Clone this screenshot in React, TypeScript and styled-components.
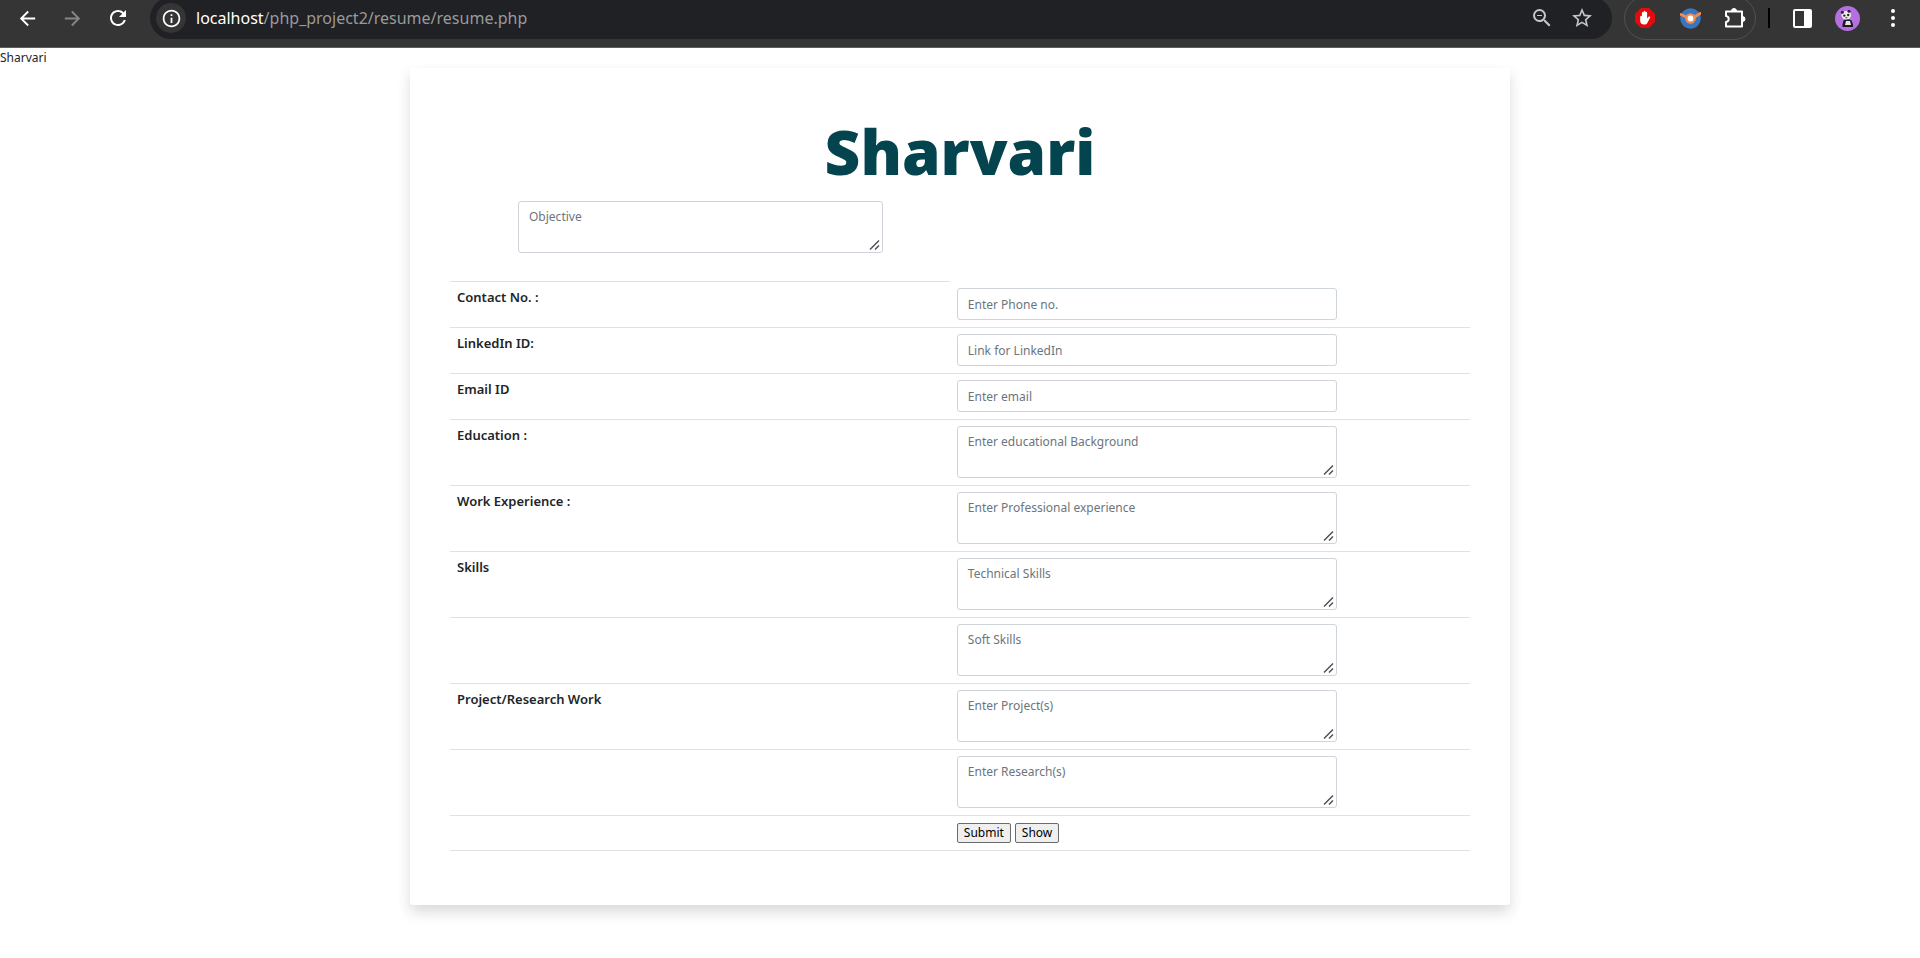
import React from 'react';
import styled, { createGlobalStyle } from 'styled-components';
import {
  MdArrowBack,
  MdArrowForward,
  MdInfoOutline,
  MdRefresh,
  MdStarBorder,
  MdZoomOut,
} from 'react-icons/md';

const GlobalStyle = createGlobalStyle`
  *, *::before, *::after { box-sizing: border-box; }
  body {
    margin: 0;
    background: #fff;
    color: #212529;
    font: 12px/20px "Noto Sans", "Open Sans", sans-serif;
  }
`;

/* Browser bar */

const Toolbar = styled.header`
  display: flex;
  align-items: flex-start;
  height: 48px;
  padding: 0 5px;
  background: #353535;
  border-bottom: 1px solid #5f5d5f;
  overflow: hidden;
`;

const ToolButton = styled.button<{ $width?: number; $color?: string }>`
  display: flex;
  flex: none;
  align-items: center;
  justify-content: center;
  width: ${p => p.$width ?? 45}px;
  height: 36px;
  padding: 0;
  border: 0;
  background: none;
  color: ${p => p.$color ?? '#fff'};
`;

const AddressBar = styled.div`
  display: flex;
  flex: 1;
  align-items: center;
  min-width: 0;
  height: 42px;
  margin: -3px 12px 0 10px;
  padding: 0 10px 0 6px;
  border-radius: 21px;
  background: #202124;
`;

const SiteInfo = styled.button`
  display: flex;
  flex: none;
  align-items: center;
  justify-content: center;
  width: 30px;
  height: 30px;
  padding: 0;
  border: 0;
  border-radius: 50%;
  background: #353535;
  color: #fff;
`;

const Url = styled.div`
  flex: 1;
  min-width: 0;
  margin-left: 10px;
  overflow: hidden;
  color: #9a9a9b;
  font-size: 16px;
  line-height: 24px;
  white-space: nowrap;
`;

const Host = styled.span`
  color: #fff;
`;

const Extensions = styled.div`
  display: flex;
  flex: none;
  align-items: center;
  justify-content: center;
  width: 132px;
  height: 44px;
  margin-top: -4px;
  border: 1px solid #505050;
  border-radius: 22px;
`;

const Divider = styled.span`
  flex: none;
  width: 2px;
  height: 20px;
  margin: 8px 10px 0 12px;
  background: #000;
`;

/* Resume form */

const UserName = styled.div`
  line-height: 20px;
`;

const Card = styled.main`
  max-width: 1100px;
  margin: 0 auto 53px;
  padding: 45px 40px 54px;
  border-radius: 3px;
  background: #fff;
  box-shadow: 0 7px 14px rgba(0, 0, 0, 0.15);
`;

const Title = styled.h1`
  margin: 0;
  color: #03444f;
  font-family: "Open Sans", sans-serif;
  font-size: 62px;
  font-weight: 800;
  line-height: 76px;
  text-align: center;
`;

const FormTable = styled.table`
  width: 100%;
  border-spacing: 0;
  table-layout: fixed;
`;

const LabelColumn = styled.col`
  width: 49%;
`;

const ObjectiveCell = styled.td`
  padding: 12px 67px 28px 68px;
  border-bottom: 1px solid #dee2e6;
`;

const LabelCell = styled.th`
  padding: 6px 7px;
  border-bottom: 1px solid #dee2e6;
  font-size: 13px;
  font-weight: 600;
  line-height: 18px;
  text-align: left;
  vertical-align: top;
`;

const FieldCell = styled.td`
  padding: 6px 7px 7px;
  border-bottom: 1px solid #dee2e6;
  vertical-align: top;
`;

const TextInput = styled.input`
  display: block;
  width: 380px;
  max-width: 100%;
  height: 32px;
  padding: 5px 10px;
  border: 1px solid #ced4da;
  border-radius: 3px;
  background: #fff;
  color: #212529;
  font: inherit;
  &::placeholder { color: #6c757d; opacity: 1; }
`;

const TextArea = styled.textarea<{ $fill?: boolean }>`
  display: block;
  width: ${p => (p.$fill ? '100%' : '380px')};
  max-width: 100%;
  height: 52px;
  padding: 5px 10px;
  border: 1px solid #ced4da;
  border-radius: 3px;
  background: #fff;
  color: #212529;
  font: inherit;
  resize: vertical;
  &::placeholder { color: #6c757d; opacity: 1; }
  &::-webkit-resizer {
    background: url("data:image/svg+xml,%3Csvg xmlns='http://www.w3.org/2000/svg' width='15' height='15'%3E%3Cpath d='M3 12.500L12 3.500M8 12.500L12 8.500' stroke='%23505050' stroke-width='1.500'/%3E%3C/svg%3E") no-repeat right bottom;
  }
`;

const Actions = styled.div`
  display: flex;
  align-items: flex-end;
  gap: 4px;
  height: 21px;
`;

const ActionButton = styled.button`
  height: 20px;
  padding: 0 6px;
  border: 1px solid #6b6b6b;
  border-radius: 2px;
  background: #efefef;
  color: #000;
  font: inherit;
  line-height: 18px;
`;

const StopHandIcon = () => (
  <svg width="20" height="22" viewBox="0 0 20 22" aria-hidden="true">
    <path d="M6 1h8l6 6v8l-6 6H6l-6-6V7z" fill="#e30b0b" />
    <path
      d="M5.2 9.5c0-1 1.6-1 1.7 0V6c0-1.200 1.700-1.200 1.700 0V4.700c0-1.200 1.800-1.200 1.800 0V5.600c0-1.200 1.700-1.200 1.700 0v6l1.300-1.700c.8-1 2.200-.2 1.700.8l-2.800 5.200c-.6 1.200-1.500 1.700-3 1.700H9c-2.200 0-3.600-1.300-3.800-3.600z"
      fill="#fff"
    />
  </svg>
);

const BlueBadgeIcon = () => (
  <svg width="21" height="21" viewBox="0 0 21 21" aria-hidden="true">
    <circle cx="10.500" cy="10.500" r="10.300" fill="#3a76c0" />
    <path d="M1 6.500l6.500 3M20 5.500l-6.500 4" stroke="#f58a4b" strokeWidth="3" strokeLinecap="round" />
    <circle cx="10.500" cy="10.500" r="5.200" fill="#f58a4b" />
    <circle cx="10.500" cy="10.500" r="2.900" fill="#fff" />
  </svg>
);

const PuzzleIcon = () => (
  <svg width="22" height="22" viewBox="0 0 22 22" aria-hidden="true">
    <path
      d="M2 4.500h16v15H2v-4.500c3.600-.4 3.600-5.600 0-6z"
      fill="none"
      stroke="#fff"
      strokeWidth="2"
      strokeLinejoin="round"
    />
    <path d="M7.500 4a2.500 2.500 0 0 1 5 0zM18.500 9.500a2.500 2.500 0 0 1 0 5z" fill="#fff" stroke="#fff" />
  </svg>
);

const SidePanelIcon = () => (
  <svg width="19" height="19" viewBox="0 0 19 19" aria-hidden="true">
    <rect x="1" y="1" width="17" height="17" rx="1" fill="none" stroke="#fff" strokeWidth="2" />
    <path d="M11 1h7v17h-7z" fill="#fff" />
  </svg>
);

const PandaAvatar = () => (
  <svg width="25" height="25" viewBox="0 0 25 25" aria-hidden="true">
    <circle cx="12.500" cy="12.500" r="12.500" fill="#b56fe0" />
    <path d="M8.500 14.500q4-2.500 8 0l1.500 4v2.500H7.500v-2.500z" fill="#1d1a1f" />
    <path d="M11 15h4l1 4h-6z" fill="#e6e3e8" />
    <ellipse cx="11.300" cy="9.300" rx="4.800" ry="4.200" fill="#ececec" />
    <circle cx="7.400" cy="6.200" r="1.500" fill="#29252b" />
    <circle cx="14" cy="5.300" r="1.500" fill="#29252b" />
    <circle cx="9.300" cy="9.600" r="1.200" fill="#29252b" />
    <circle cx="13.200" cy="9" r="1.200" fill="#29252b" />
    <path d="M10.500 11.800h1.800" stroke="#29252b" />
  </svg>
);

const DotsIcon = () => (
  <svg width="6" height="20" viewBox="0 0 6 20" aria-hidden="true" fill="#fff">
    <circle cx="3" cy="3" r="2" />
    <circle cx="3" cy="10" r="2" />
    <circle cx="3" cy="17" r="2" />
  </svg>
);

type Field = {
  id: string;
  label?: string;
  placeholder: string;
  multiline?: boolean;
};

const fields: Field[] = [
  { id: 'contact', label: 'Contact No. :', placeholder: 'Enter Phone no.' },
  { id: 'linkedin', label: 'LinkedIn ID:', placeholder: 'Link for LinkedIn' },
  { id: 'email', label: 'Email ID', placeholder: 'Enter email' },
  { id: 'education', label: 'Education :', placeholder: 'Enter educational Background', multiline: true },
  { id: 'experience', label: 'Work Experience :', placeholder: 'Enter Professional experience', multiline: true },
  { id: 'technical', label: 'Skills', placeholder: 'Technical Skills', multiline: true },
  { id: 'soft', placeholder: 'Soft Skills', multiline: true },
  { id: 'projects', label: 'Project/Research Work', placeholder: 'Enter Project(s)', multiline: true },
  { id: 'research', placeholder: 'Enter Research(s)', multiline: true },
];

const FieldRow = ({ id, label, placeholder, multiline }: Field) => {
  const Control = multiline ? TextArea : TextInput;
  return (
    <tr>
      <LabelCell scope="row">{label && <label htmlFor={id}>{label}</label>}</LabelCell>
      <FieldCell>
        <Control
          id={id}
          name={id}
          placeholder={placeholder}
          aria-label={label ? undefined : placeholder}
        />
      </FieldCell>
    </tr>
  );
};

const BrowserBar = () => (
  <Toolbar>
    <ToolButton aria-label="Back"><MdArrowBack size={23} /></ToolButton>
    <ToolButton aria-label="Forward" $color="#868686"><MdArrowForward size={23} /></ToolButton>
    <ToolButton aria-label="Reload"><MdRefresh size={24} /></ToolButton>
    <AddressBar>
      <SiteInfo aria-label="Site information"><MdInfoOutline size={21} /></SiteInfo>
      <Url><Host>localhost</Host>/php_project2/resume/resume.php</Url>
      <ToolButton aria-label="Zoom" $width={40} $color="#c7c7c7"><MdZoomOut size={24} /></ToolButton>
      <ToolButton aria-label="Bookmark" $width={40} $color="#c7c7c7"><MdStarBorder size={24} /></ToolButton>
    </AddressBar>
    <Extensions>
      <ToolButton aria-label="Ad blocker"><StopHandIcon /></ToolButton>
      <ToolButton aria-label="Extension"><BlueBadgeIcon /></ToolButton>
      <ToolButton aria-label="Extensions"><PuzzleIcon /></ToolButton>
    </Extensions>
    <Divider />
    <ToolButton aria-label="Side panel"><SidePanelIcon /></ToolButton>
    <ToolButton aria-label="Profile"><PandaAvatar /></ToolButton>
    <ToolButton aria-label="Menu"><DotsIcon /></ToolButton>
  </Toolbar>
);

export default function App() {
  return (
    <>
      <GlobalStyle />
      <BrowserBar />
      <UserName>Sharvari</UserName>
      <Card>
        <Title>Sharvari</Title>
        <form onSubmit={e => e.preventDefault()}>
          <FormTable>
            <colgroup>
              <LabelColumn />
              <col />
            </colgroup>
            <tbody>
              <tr>
                <ObjectiveCell>
                  <TextArea $fill name="objective" placeholder="Objective" aria-label="Objective" />
                </ObjectiveCell>
              </tr>
              {fields.map(field => (
                <FieldRow key={field.id} {...field} />
              ))}
              <tr>
                <LabelCell />
                <FieldCell>
                  <Actions>
                    <ActionButton type="submit">Submit</ActionButton>
                    <ActionButton type="button">Show</ActionButton>
                  </Actions>
                </FieldCell>
              </tr>
            </tbody>
          </FormTable>
        </form>
      </Card>
    </>
  );
}
